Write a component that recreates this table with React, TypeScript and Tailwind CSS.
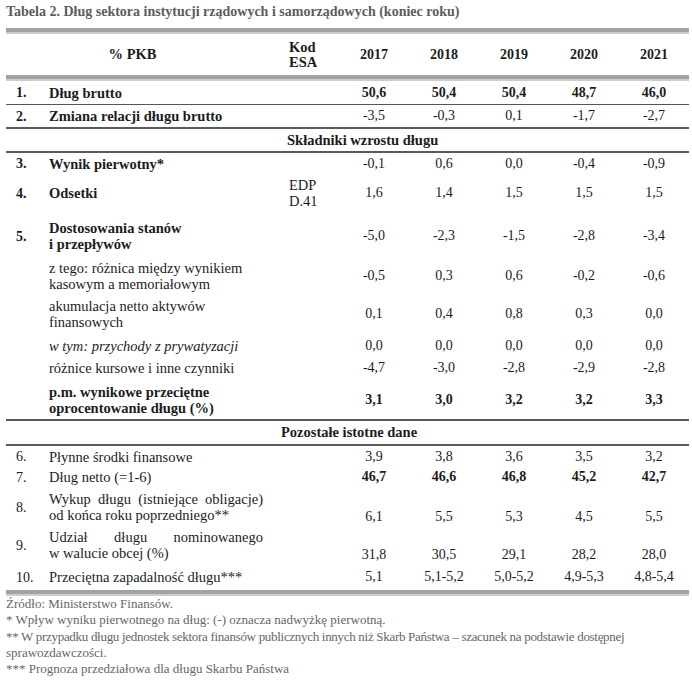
import React from "react";

const cols = "grid grid-cols-[43px_222px_68px_70px_70px_70px_70px_70px]";

type RowProps = {
  num?: string;
  label: React.ReactNode;
  kod?: React.ReactNode;
  vals: string[];
  h: string;
  bold?: boolean;
  valBold?: boolean;
  valClass?: string;
};

function Row({ num, label, kod, vals, h, bold, valBold, valClass }: RowProps) {
  return (
    <div className={`${cols} ${h} items-center`}>
      <div className={`pl-[10px] text-[14px] ${bold ? "font-bold" : ""}`}>{num}</div>
      <div className={`leading-[16px] text-[14.5px] ${bold ? "font-bold" : ""}`}>{label}</div>
      <div className="pl-[18px] leading-[16px] text-[14.5px]">{kod}</div>
      {vals.map((v, i) => (
        <div
          key={i}
          className={`text-center leading-[16px] text-[14px] ${valBold ? "font-bold" : ""} ${valClass ?? ""}`}
        >
          {v}
        </div>
      ))}
    </div>
  );
}

function DoubleRule() {
  return (
    <div className="flex flex-col">
      <div className="h-[4px] bg-[#a2a2a2]" />
      <div className="h-[2px] bg-[#cdcdcd]" />
    </div>
  );
}

export default function App() {
  return (
    <div
      className="w-[692px] h-[685px] bg-white text-[#1c1c1c] text-[14px]"
      style={{ fontFamily: '"Liberation Serif", "Times New Roman", serif' }}
    >
      <div className="pl-[6px] h-[24px] leading-[24px] font-bold text-[#5c5c5c] text-[14px]">
        Tabela 2. Dług sektora instytucji rządowych i samorządowych (koniec roku)
      </div>
      <div className="ml-[6px] w-[683px] mt-[4px]">
        <DoubleRule />
        <div className={`${cols} h-[41px] items-center font-bold`}>
          <div className="col-span-2 text-center pr-[12px] text-[14.5px]">% PKB</div>
          <div className="pl-[18px] leading-[15px] text-[14.5px]">
            Kod
            <br />
            ESA
          </div>
          <div className="text-center">2017</div>
          <div className="text-center">2018</div>
          <div className="text-center">2019</div>
          <div className="text-center">2020</div>
          <div className="text-center">2021</div>
        </div>
        <DoubleRule />
        <Row
          num="1."
          label="Dług brutto"
          vals={["50,6", "50,4", "50,4", "48,7", "46,0"]}
          h="h-[23px]"
          bold
          valBold
        />
        <div className="h-[1px] bg-[#555]" />
        <Row
          num="2."
          label="Zmiana relacji długu brutto"
          vals={["-3,5", "-0,3", "0,1", "-1,7", "-2,7"]}
          h="h-[22px]"
          bold
        />
        <div className="h-[2px] bg-[#5a5a5a]" />
        <div className="h-[22px] leading-[22px] pl-[281px] font-bold text-[14.5px]">
          Składniki wzrostu długu
        </div>
        <div className="h-[2px] bg-[#5a5a5a]" />
        <Row
          num="3."
          label="Wynik pierwotny*"
          vals={["-0,1", "0,6", "0,0", "-0,4", "-0,9"]}
          h="h-[21px]"
          bold
        />
        <Row
          num="4."
          label="Odsetki"
          kod={
            <>
              EDP
              <br />
              D.41
            </>
          }
          vals={["1,6", "1,4", "1,5", "1,5", "1,5"]}
          h="h-[38px]"
          bold
        />
        <Row
          num="5."
          label={
            <>
              Dostosowania stanów
              <br />i przepływów
            </>
          }
          vals={["-5,0", "-2,3", "-1,5", "-2,8", "-3,4"]}
          h="h-[48px]"
          bold
        />
        <Row
          label={
            <>
              z tego: różnica między wynikiem
              <br />
              kasowym a memoriałowym
            </>
          }
          vals={["-0,5", "0,3", "0,6", "-0,2", "-0,6"]}
          h="h-[32px]"
        />
        <Row
          label={
            <>
              akumulacja netto aktywów
              <br />
              finansowych
            </>
          }
          vals={["0,1", "0,4", "0,8", "0,3", "0,0"]}
          h="h-[44px]"
        />
        <Row
          label={<span className="italic">w tym: przychody z prywatyzacji</span>}
          vals={["0,0", "0,0", "0,0", "0,0", "0,0"]}
          h="h-[19px]"
        />
        <Row
          label="różnice kursowe i inne czynniki"
          vals={["-4,7", "-3,0", "-2,8", "-2,9", "-2,8"]}
          h="h-[26px]"
        />
        <Row
          label={
            <span className="font-bold">
              p.m. wynikowe przeciętne
              <br />
              oprocentowanie długu (%)
            </span>
          }
          vals={["3,1", "3,0", "3,2", "3,2", "3,3"]}
          h="h-[38px]"
          valBold
        />
        <div className="h-[2px] bg-[#5a5a5a]" />
        <div className="h-[23px] leading-[23px] pl-[275px] font-bold text-[14.5px]">
          Pozostałe istotne dane
        </div>
        <div className="h-[2px] bg-[#5a5a5a]" />
        <Row
          num="6."
          label="Płynne środki finansowe"
          vals={["3,9", "3,8", "3,6", "3,5", "3,2"]}
          h="h-[20px]"
        />
        <Row
          num="7."
          label="Dług netto (=1-6)"
          vals={["46,7", "46,6", "46,8", "45,2", "42,7"]}
          h="h-[22px]"
          valBold
        />
        <Row
          num="8."
          label={
            <div className="w-[214px]">
              <div className="[text-align-last:justify]">
                Wykup długu (istniejące obligacje)
              </div>
              <div>od końca roku poprzedniego**</div>
            </div>
          }
          vals={["6,1", "5,5", "5,3", "4,5", "5,5"]}
          h="h-[38px]"
          valClass="self-end pb-[1px]"
        />
        <Row
          num="9."
          label={
            <div className="w-[214px]">
              <div className="[text-align-last:justify]">
                Udział długu nominowanego
              </div>
              <div>w walucie obcej (%)</div>
            </div>
          }
          vals={["31,8", "30,5", "29,1", "28,2", "28,0"]}
          h="h-[38px]"
          valClass="self-end pb-[1px]"
        />
        <Row
          num="10."
          label="Przeciętna zapadalność długu***"
          vals={["5,1", "5,1-5,2", "5,0-5,2", "4,9-5,3", "4,8-5,4"]}
          h="h-[26px]"
        />
        <DoubleRule />
      </div>
      <div className="pl-[6px] text-[13px] leading-[16.3px] text-[#666] whitespace-nowrap">
        <div>Źródło: Ministerstwo Finansów.</div>
        <div>* Wpływ wyniku pierwotnego na dług: (-) oznacza nadwyżkę pierwotną.</div>
        <div className="tracking-[-0.3px]">
          ** W przypadku długu jednostek sektora finansów publicznych innych niż Skarb Państwa – szacunek na podstawie dostępnej
        </div>
        <div>sprawozdawczości.</div>
        <div>*** Prognoza przedziałowa dla długu Skarbu Państwa</div>
      </div>
    </div>
  );
}
